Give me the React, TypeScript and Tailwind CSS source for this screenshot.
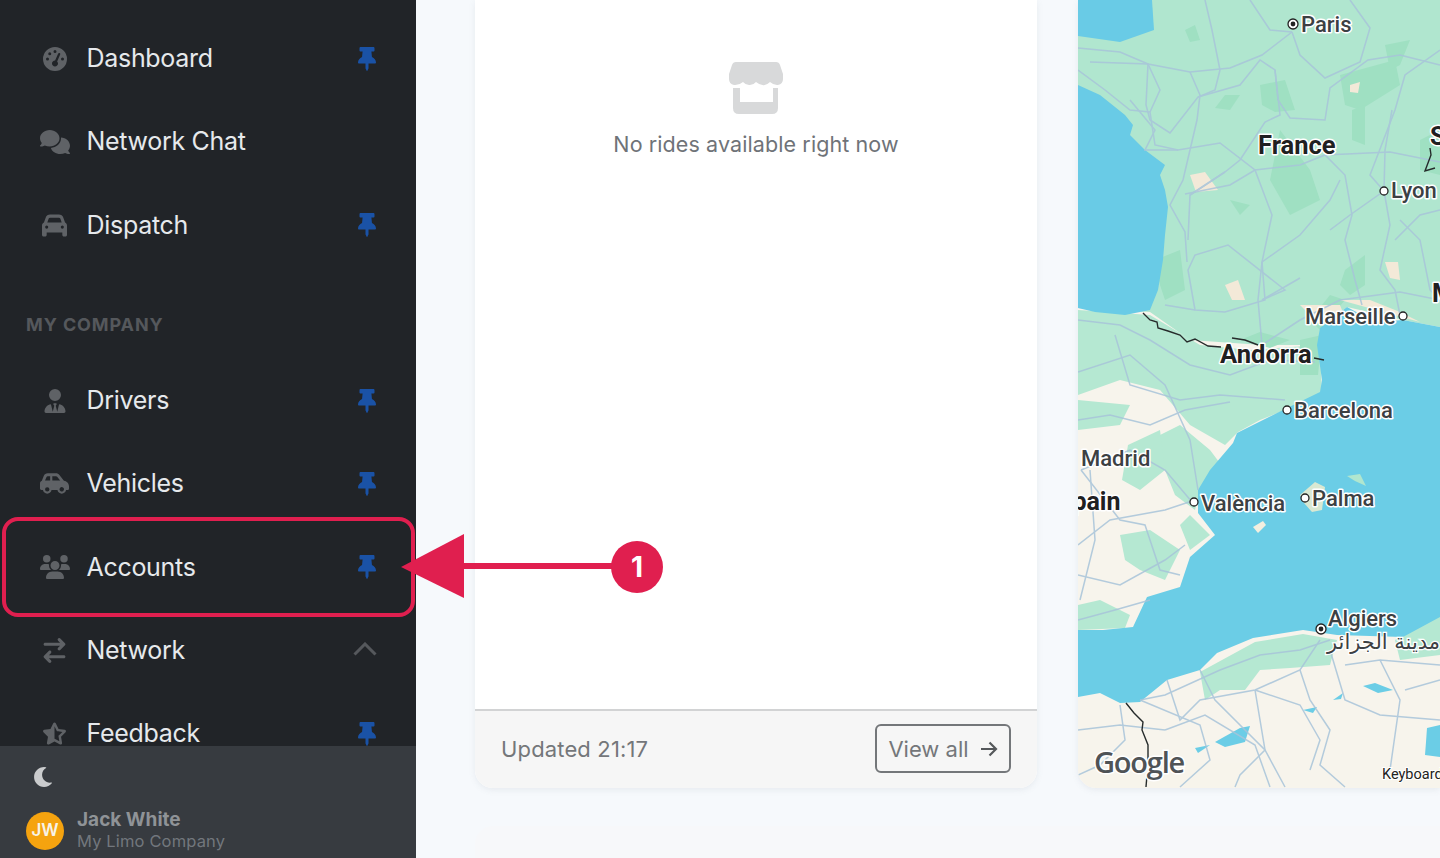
import React from "react";
import { FaThumbtack, FaMoon } from "react-icons/fa";
import { FaGaugeHigh, FaComments, FaCar, FaUserTie, FaCarSide, FaUsers, FaArrowRightArrowLeft, FaStarHalfStroke } from "react-icons/fa6";

type Item = { label: string; icon: React.ReactNode; pin?: boolean; chevron?: boolean };

const iconCls = "text-[#5f6266]";
const top: Item[] = [
  { label: "Dashboard", icon: <FaGaugeHigh className={iconCls} size={24} />, pin: true },
  { label: "Network Chat", icon: <FaComments className={iconCls} size={30} /> },
  { label: "Dispatch", icon: <FaCar className={iconCls} size={25} />, pin: true },
];
const company: Item[] = [
  { label: "Drivers", icon: <FaUserTie className={iconCls} size={24} />, pin: true },
  { label: "Vehicles", icon: <FaCarSide className={iconCls} size={29} />, pin: true },
  { label: "Accounts", icon: <FaUsers className={iconCls} size={30} />, pin: true },
  { label: "Network", icon: <FaArrowRightArrowLeft className={iconCls} size={25} />, chevron: true },
  { label: "Feedback", icon: <FaStarHalfStroke className={iconCls} size={25} />, pin: true },
];

function NavRow({ item }: { item: Item }) {
  return (
    <div className="flex h-[83.33px] shrink-0 items-center pl-[39px] pr-[37px]">
      <div className="flex w-[31px] justify-center">{item.icon}</div>
      <span className="ml-[16.5px] text-[25px] leading-none tracking-[-0.3px] text-[#e6e9ec]">{item.label}</span>
      {item.pin && <FaThumbtack className="ml-auto text-[#1a52a6]" size={24} />}
      {item.chevron && (
        <svg className="ml-auto mr-[2px] -mt-[4px]" width="24" height="14" viewBox="0 0 24 14" fill="none" stroke="#55585c" strokeWidth="3">
          <path d="M1.5 12.5 12 2l10.5 10.5" />
        </svg>
      )}
    </div>
  );
}

function Sidebar() {
  return (
    <aside className="flex h-full w-[416px] shrink-0 flex-col bg-[#212428]">
      <nav className="flex min-h-0 flex-1 flex-col overflow-hidden pt-[17px]">
        {top.map((i) => <NavRow key={i.label} item={i} />)}
        <div className="mt-[45px] mb-[22px] shrink-0 pl-[26px] text-[18px] font-bold leading-[25px] tracking-[0.9px] text-[#55585c]">MY COMPANY</div>
        {company.map((i) => <NavRow key={i.label} item={i} />)}
      </nav>
      <div className="h-[112px] shrink-0 bg-[#373b40] pl-[26px]">
        <FaMoon className="ml-[7px] mt-[21px] text-[#c9cbcd]" size={20} />
        <div className="mt-[23px] flex items-center gap-[13px]">
          <div className="flex h-[38px] w-[38px] items-center justify-center rounded-full bg-[#f5a30f] text-[17px] font-semibold text-[#f7f3e8]">JW</div>
          <div className="-mt-[2px]">
            <div className="text-[19px] font-bold leading-[24px] text-[#8f9397]">Jack White</div>
            <div className="-mt-[1px] text-[16.5px] leading-[20px] tracking-[0.15px] text-[#72777d]">My Limo Company</div>
          </div>
        </div>
      </div>
    </aside>
  );
}

function StoreIcon() {
  return (
    <svg width="54" height="52" viewBox="0 0 54 52" fill="#d8d9da">
      <path d="M7 0H47Q50 0 51 3L54 12V17Q54 22 49 23Q45 23.500 41 20Q37 24 33.500 23Q30 22.500 27 20Q24 23.500 20 23Q16 22.500 14 20Q10 23.500 5 23Q0 22 0 17V12L3 3Q4 0 7 0Z" />
      <path d="M4 26H11V40H44V26H49V46Q49 52 43 52H10Q4 52 4 46Z" />
    </svg>
  );
}

function RidesCard() {
  return (
    <section className="flex w-[562px] shrink-0 flex-col overflow-hidden rounded-b-[18px] bg-white shadow-[0_2px_6px_rgba(120,130,150,0.12)]">
      <div className="flex flex-1 flex-col items-center pt-[62px]">
        <StoreIcon />
        <p className="mt-[14px] text-[21.5px] leading-[32px] tracking-[0.1px] text-[#6f7378]">No rides available right now</p>
      </div>
      <footer className="flex h-[79px] shrink-0 items-center justify-between border-t-2 border-[#d2d3d4] bg-[#f6f6f6] pl-[26px] pr-[26px]">
        <span className="text-[22px] tracking-[0.15px] text-[#74777a]">Updated 21:17</span>
        <div className="mb-[2px] flex h-[49px] w-[136px] items-center justify-center gap-[11px] rounded-[6px] border-2 border-[#74777a] pt-[1px] text-[22px] text-[#74777a]">
          View all
          <svg width="18" height="16" viewBox="0 0 18 16" fill="none" stroke="#55585b" strokeWidth="2.2">
            <path d="M1 8h15M9.500 1.500 16 8l-6.500 6.500" />
          </svg>
        </div>
      </footer>
    </section>
  );
}

const roads = [
  "M1078 48L1120 52L1148 64L1190 72L1230 68L1262 55L1292 32",
  "M1090 62L1148 64L1146 105L1150 120L1170 133L1198 97L1215 90L1220 70L1212 30L1205 0",
  "M1148 64L1160 90L1150 112L1155 145L1178 150L1220 143L1255 170L1272 215L1262 262L1258 300L1262 345",
  "M1190 72L1200 95L1197 120L1190 150L1183 180L1170 205L1185 232L1187 262",
  "M1198 97L1240 85L1260 60L1275 70L1278 100L1290 118L1325 120L1330 88L1368 60L1400 55L1440 65",
  "M1292 32L1300 55L1325 78L1360 62L1370 28L1350 0",
  "M1292 32L1270 30L1250 0",
  "M1275 70L1280 115L1265 122L1240 160L1225 172L1190 195",
  "M1185 194L1230 185L1255 170L1300 165L1325 155L1345 175L1352 215L1345 240L1355 280L1362 305",
  "M1325 155L1390 152L1440 162",
  "M1384 191L1370 175L1395 110L1405 75L1440 50",
  "M1384 191L1385 150L1392 110",
  "M1384 191L1390 225L1380 270L1395 290L1400 315",
  "M1384 191L1350 215L1330 230",
  "M1400 220L1420 240L1430 290L1440 300",
  "M1440 210L1420 215L1395 240",
  "M1262 262L1265 300L1225 312L1195 310L1165 305",
  "M1262 262L1300 235L1330 200L1340 180",
  "M1195 310L1188 270L1195 255L1228 245L1285 290L1262 300",
  "M1262 300L1300 278",
  "M1130 100L1155 130L1145 150L1178 150",
  "M1078 70L1105 90L1130 110L1150 112",
  "M1188 240L1190 195L1225 172",
  "M1262 345L1300 320L1340 300L1400 292L1440 300",
  "M1078 320L1120 325L1150 340L1190 365L1230 375L1270 360L1315 362",
  "M1115 335L1130 385L1180 400L1220 395L1285 400",
  "M1078 372L1130 355L1165 385L1190 440L1198 490",
  "M1078 420L1110 415L1150 425L1185 410L1230 402",
  "M1081 470L1130 450L1165 470L1192 502",
  "M1081 470L1120 520L1145 525L1160 570L1180 575",
  "M1078 545L1110 520L1165 510L1195 500",
  "M1078 575L1120 585L1165 560L1185 545",
  "M1078 620L1115 610L1150 600",
  "M1090 470L1095 540L1080 600",
  "M1140 700L1165 695L1220 670L1260 655L1300 650L1330 640",
  "M1167 680L1180 720L1200 700L1255 690L1300 670L1320 640",
  "M1120 705L1125 740L1100 765L1078 775",
  "M1200 670L1215 700L1265 750L1285 787",
  "M1255 690L1265 750L1240 775L1235 787",
  "M1255 690L1300 705L1320 740L1310 770",
  "M1300 670L1310 700L1330 730L1320 765L1345 787",
  "M1330 650L1345 700L1380 715L1440 720",
  "M1345 665L1380 660L1440 665",
  "M1380 660L1400 700L1390 770",
  "M1405 690L1440 680",
  "M1165 730L1205 715L1255 745L1270 787",
  "M1078 730L1120 725L1165 730",
  "M1140 700L1200 725L1210 760L1180 787",
];

const greens = [
  "M1078 310L1150 315L1200 345L1250 350L1320 345L1322 395L1290 408L1260 420L1238 432L1225 445L1190 425L1160 390L1120 380L1078 395Z",
  "M1078 400L1130 405L1120 425L1078 430Z",
  "M1150 440L1180 425L1210 450L1225 470L1200 490L1195 510L1175 495L1165 470Z",
  "M1128 445L1160 430L1165 470L1140 490L1122 480Z",
  "M1120 535L1150 530L1180 550L1165 580L1140 570L1125 560Z",
  "M1078 605L1100 600L1130 615L1125 628L1078 630Z",
  "M1200 672L1255 642L1303 634L1337 640L1330 665L1290 668L1260 670L1245 690L1220 690L1205 700Z",
  "M1420 625L1440 610L1440 655L1400 660L1395 640Z",
  "M1180 525L1190 515L1210 535L1190 550Z",
];

const darkGreens = [
  "M1260 85L1285 80L1295 110L1275 112L1262 105Z",
  "M1340 75L1395 60L1400 85L1360 110L1345 105Z",
  "M1352 110L1365 105L1365 145L1352 140Z",
  "M1385 45L1410 40L1400 65L1390 70Z",
  "M1185 30L1195 25L1200 40L1190 42Z",
  "M1345 270L1365 255L1365 285L1350 295L1340 285Z",
  "M1225 95L1240 95L1230 110L1215 108Z",
  "M1230 200L1250 205L1240 215Z",
  "M1155 260L1180 250L1185 290L1165 300L1160 285Z",
  "M1310 320L1330 295L1345 300L1320 330Z",
  "M1240 340L1260 332L1290 340L1270 348Z",
  "M1300 340L1322 335L1318 375L1300 375Z",
  "M1280 130L1310 170L1320 200L1290 215L1270 180Z",
  "M1420 140L1440 130L1440 175L1420 170Z",
];

const beige = [
  "M1190 175L1205 172L1218 190L1196 192Z",
  "M1350 85L1360 82L1358 93L1350 92Z",
  "M1225 285L1238 280L1245 300L1232 300Z",
  "M1385 262L1398 262L1400 280L1390 278Z",
  "M1300 305L1340 305L1345 318L1320 325Z",
  "M1340 300L1420 322L1400 312L1370 300Z",
];

function MapCanvas() {
  const label = "font-['Roboto',sans-serif]";
  const t = (x: number, y: number, s: string, size = 22, bold = false, fill = "#3c4043") => (
    <text x={x} y={y} fontSize={size} fontWeight={bold ? 700 : 500} fill={fill} stroke="#fff" strokeWidth={3} strokeLinejoin="round" paintOrder="stroke" className={label}>{s}</text>
  );
  const city = (x: number, y: number, capital = false) => (
    <g>
      <circle cx={x} cy={y} r={capital ? 5 : 4} fill="#fff" stroke="#222" strokeWidth={1.3} />
      {capital && <circle cx={x} cy={y} r={2.4} fill="#222" />}
    </g>
  );
  return (
    <svg className="block h-full w-full" viewBox="1078 0 362 788" preserveAspectRatio="xMinYMin slice">
      <rect x="1078" y="0" width="362" height="788" fill="#f7f4ec" />
      <path d="M1078 0H1440V327L1403 320L1347 307L1320 328L1322 345L1262 345L1190 340L1150 312L1078 308Z" fill="#b0e6cf" />
      {greens.map((d, i) => <path key={i} d={d} fill="#b5e8d2" />)}
      {darkGreens.map((d, i) => <path key={i} d={d} fill="#9fe0c2" />)}
      {beige.map((d, i) => <path key={i} d={d} fill="#f3e9d8" />)}
      <path d="M1078 0H1152L1154 30L1120 42L1078 36Z" fill="#69cbe6" />
      <path d="M1078 85L1100 95L1125 115L1133 125L1130 135L1145 150L1165 165L1160 175L1165 190L1168 207L1165 235L1163 260L1158 290L1150 310L1125 315L1095 312L1078 308Z" fill="#69cbe6" />
      <path d="M1440 327L1403 320L1375 322L1347 307L1320 328L1317 345L1322 380L1320 392L1283 410L1257 423L1237 433L1233 443L1210 470L1198 490L1198 513L1215 535L1190 557L1180 587L1147 597L1133 627L1103 630L1078 630V697L1100 693L1120 703L1140 702L1167 680L1200 670L1217 653L1253 638L1303 630L1337 635L1403 637L1440 617Z" fill="#6bcde6" />
      <path d="M1300 495L1315 482L1325 487L1322 510L1312 512L1304 503Z" fill="#d9e8d2" />
      <path d="M1347 476L1360 474L1366 486L1355 481Z" fill="#b0e6cf" />
      <path d="M1253 527L1263 521L1266 525L1258 533Z" fill="#f3efe0" />
      <g fill="#6bcde6">
        <path d="M1363 686L1375 683L1393 690L1378 693Z" />
        <path d="M1333 700L1343 693L1341 699Z" />
        <path d="M1303 710L1317 707L1313 713Z" />
        <path d="M1215 742L1240 728L1250 726L1245 742L1225 747Z" />
        <path d="M1195 748L1210 745L1198 753Z" />
        <path d="M1427 728L1440 725V757L1425 755L1426 742Z" />
      </g>
      <g fill="none" stroke="#a8c4da" strokeWidth="1.5" opacity="0.85">
        {roads.map((d, i) => <path key={i} d={d} />)}
      </g>
      <g fill="none" stroke="#262b2b" strokeWidth="1.4">
        <path d="M1143 313L1150 320L1157 322L1158 328L1168 331L1180 335L1187 342L1195 339L1208 346L1221 347" />
        <path d="M1232 338L1245 340L1258 345" />
        <path d="M1314 358L1324 360" />
        <path d="M1430 148L1431 155L1425 171L1435 168" />
        <path d="M1126 703L1134 713L1143 722L1142 730L1148 745L1148 760" />
        <path d="M1147 775L1146 787" />
      </g>
      {t(1301, 32, "Paris")}{city(1293, 24, true)}
      {t(1258, 154, "France", 25.5, true, "#1f2021")}
      {t(1430, 145, "S", 25, true, "#1f2021")}
      {t(1391, 198, "Lyon")}{city(1384, 191)}
      {t(1432, 302, "M", 25, true, "#1f2021")}
      {t(1305, 324, "Marseille")}{city(1403, 316)}
      {t(1220, 363, "Andorra", 25.5, true, "#1f2021")}
      {t(1294, 418, "Barcelona")}{city(1287, 410)}
      {t(1081, 466, "Madrid")}
      {t(1057, 510, "Spain", 25, true, "#1f2021")}
      {t(1201, 511, "València")}{city(1194, 502)}
      {t(1312, 506, "Palma")}{city(1305, 498)}
      {t(1328, 626, "Algiers")}{city(1321, 629, true)}
      <text x={1327} y={649} fontSize={21} direction="rtl" textAnchor="end" fill="#3c4043" stroke="#fff" strokeWidth={2.5} paintOrder="stroke" className="font-['DejaVu_Sans',sans-serif]">مدينة الجزائر</text>
      <text x={1094} y={773} fontSize={29} fontWeight={600} fill="#4f5356" stroke="#fff" strokeWidth={3} paintOrder="stroke" className="font-['Open_Sans',sans-serif]" letterSpacing="-1.2">Google</text>
      <text x={1382} y={779} fontSize={14.5} fontWeight={400} fill="#222" stroke="#fff" strokeWidth={2} paintOrder="stroke" className={label}>Keyboard shortcuts</text>
    </svg>
  );
}

function Annotation() {
  return (
    <>
      <div className="absolute left-[2px] top-[517px] h-[100px] w-[413px] rounded-[16px] border-[4px] border-[#e01f4f]" />
      <svg className="absolute left-[400px] top-[530px]" width="270" height="72" viewBox="0 0 270 72" fill="#e01f4f">
        <path d="M1 37 64 4V68Z" />
        <rect x="60" y="33" width="160" height="6" />
        <circle cx="237" cy="37" r="26" />
      </svg>
      <span className="absolute left-[611px] top-[541px] flex h-[52px] w-[52px] items-center justify-center text-[28px] font-bold text-white">1</span>
    </>
  );
}

export default function App() {
  return (
    <div className="relative flex h-[858px] w-[1440px] overflow-hidden bg-[#f6f9fc] font-['Inter','Noto_Sans',sans-serif]">
      <Sidebar />
      <main className="flex min-w-0 flex-1 flex-col pl-[59px]">
        <div className="flex h-[788px] shrink-0 gap-[41px]">
          <RidesCard />
          <section className="min-w-0 flex-1 overflow-hidden rounded-bl-[18px] shadow-[0_2px_6px_rgba(120,130,150,0.12)]">
            <MapCanvas />
          </section>
        </div>
        <div className="mt-[38px] flex-1 rounded-tl-[18px] bg-[#f7f8fa]" />
      </main>
      <Annotation />
    </div>
  );
}
